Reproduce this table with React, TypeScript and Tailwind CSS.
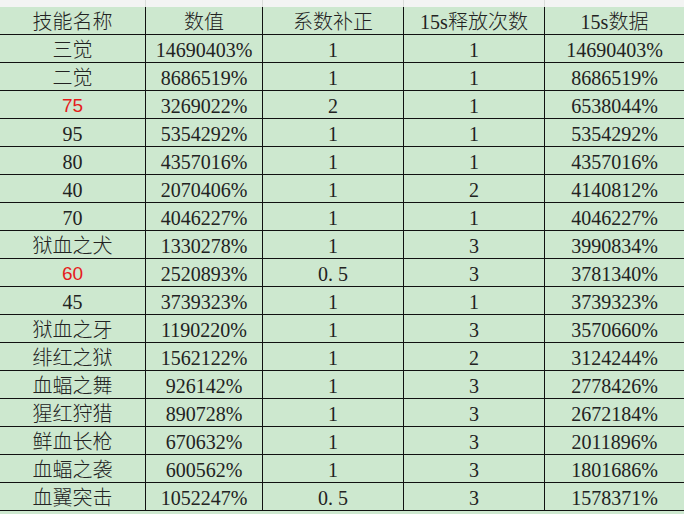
import React from 'react'

type Row = {
  name: string
  value: string
  coef: string
  times: string
  total: string
  red?: boolean
}

const ROWS: Row[] = [
  { name: '三觉', value: '14690403%', coef: '1', times: '1', total: '14690403%' },
  { name: '二觉', value: '8686519%', coef: '1', times: '1', total: '8686519%' },
  { name: '75', value: '3269022%', coef: '2', times: '1', total: '6538044%', red: true },
  { name: '95', value: '5354292%', coef: '1', times: '1', total: '5354292%' },
  { name: '80', value: '4357016%', coef: '1', times: '1', total: '4357016%' },
  { name: '40', value: '2070406%', coef: '1', times: '2', total: '4140812%' },
  { name: '70', value: '4046227%', coef: '1', times: '1', total: '4046227%' },
  { name: '狱血之犬', value: '1330278%', coef: '1', times: '3', total: '3990834%' },
  { name: '60', value: '2520893%', coef: '0.5', times: '3', total: '3781340%', red: true },
  { name: '45', value: '3739323%', coef: '1', times: '1', total: '3739323%' },
  { name: '狱血之牙', value: '1190220%', coef: '1', times: '3', total: '3570660%' },
  { name: '绯红之狱', value: '1562122%', coef: '1', times: '2', total: '3124244%' },
  { name: '血蝠之舞', value: '926142%', coef: '1', times: '3', total: '2778426%' },
  { name: '猩红狩猎', value: '890728%', coef: '1', times: '3', total: '2672184%' },
  { name: '鲜血长枪', value: '670632%', coef: '1', times: '3', total: '2011896%' },
  { name: '血蝠之袭', value: '600562%', coef: '1', times: '3', total: '1801686%' },
  { name: '血翼突击', value: '1052247%', coef: '0.5', times: '3', total: '1578371%' },
]

const HEADERS = ['技能名称', '数值', '系数补正', '15s释放次数', '15s数据']

const GRID = 'grid grid-cols-[146px_117px_141px_141px_139px]'

function Coef({ v }: { v: string }) {
  if (v !== '0.5') return <>{v}</>
  return (
    <>
      0<span className="mr-[5px]">.</span>5
    </>
  )
}

function Cell({ children, last, red }: { children: React.ReactNode; last?: boolean; red?: boolean }) {
  return (
    <div
      className={
        'h-[28px] pt-[2px] flex items-center justify-center border-b border-[#111] ' +
        (last ? '' : 'border-r ') +
        (red ? "text-[#e51c1c] font-['Liberation_Sans',sans-serif] text-[19px]" : '')
      }
    >
      {children}
    </div>
  )
}

export default function App() {
  return (
    <div
      className="w-[684px] h-[514px] overflow-hidden bg-[#cde8cf] text-[#222] text-[20px] leading-none font-light"
      style={{ fontFamily: '"Liberation Serif", "Noto Sans CJK SC", serif' }}
    >
      {/* row above, cut off */}
      <div className={GRID + ' h-[7px] bg-[#f3f4f3]'}>
        {HEADERS.map((h, i) => (
          <div key={h} className={i < 4 ? 'border-r border-[#d9dcd9]' : ''} />
        ))}
      </div>
      <div className={GRID}>
        {HEADERS.map((h, i) => (
          <Cell key={h} last={i === 4}>
            {h}
          </Cell>
        ))}
        {ROWS.map(r => (
          <React.Fragment key={r.name}>
            <Cell red={r.red}>{r.name}</Cell>
            <Cell>{r.value}</Cell>
            <Cell>
              <Coef v={r.coef} />
            </Cell>
            <Cell>{r.times}</Cell>
            <Cell last>{r.total}</Cell>
          </React.Fragment>
        ))}
      </div>
    </div>
  )
}
